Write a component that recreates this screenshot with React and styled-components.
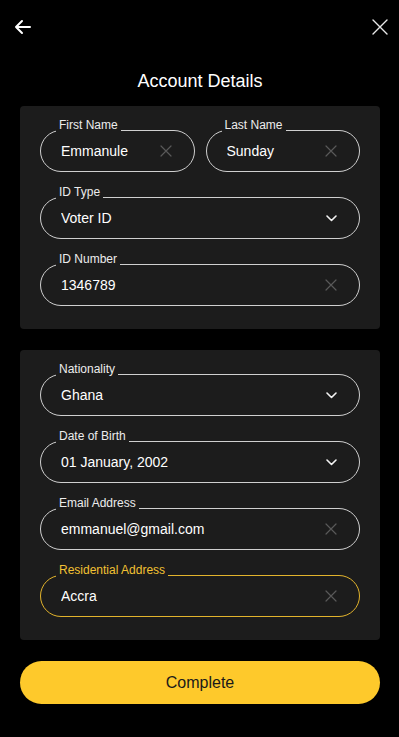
import React from "react"
import styled, { createGlobalStyle } from "styled-components"

const GlobalStyle = createGlobalStyle`
  * { box-sizing: border-box; }
  html, body {
    margin: 0;
    background: #000;
    font-family: "Liberation Sans", Arial, sans-serif;
    color: #fff;
  }
`

const Page = styled.div`
  width: 399px;
  min-height: 737px;
  background: #000;
  padding: 0 19px 0 20px;
`

const TopBar = styled.header`
  height: 54px;
  margin: 0 -8px 0 -6px;
  display: flex;
  align-items: center;
  justify-content: space-between;
`

const IconButton = styled.button`
  background: none;
  border: 0;
  padding: 0;
  display: flex;
  align-items: center;
  justify-content: center;
  cursor: pointer;
`

const Title = styled.h1`
  margin: 16px 0 14px;
  font-size: 18px;
  line-height: 22px;
  font-weight: 400;
  text-align: center;
  color: #fff;
`

const Card = styled.section`
  background: #1c1c1c;
  border-radius: 4px;
  padding: 12px 20px 23px;
  display: flex;
  flex-direction: column;
  gap: 13px;
  & + & {
    margin-top: 21px;
  }
`

const Row = styled.div`
  display: grid;
  grid-template-columns: 1fr 1fr;
  gap: 11px;
`

const Field = styled.fieldset`
  margin: 0;
  min-width: 0;
  padding: 0 22px 0 20px;
  font-family: "Liberation Sans", Arial, sans-serif;
  border: 1px solid ${p => (p.$active ? "#e2b32c" : "#cfcfcf")};
  border-radius: 22px;
`

const Legend = styled.legend`
  margin-left: -5px;
  padding: 0 3px 10px;
  font-family: "Liberation Sans", Arial, sans-serif;
  font-size: 12px;
  line-height: 14px;
  color: ${p => (p.$active ? "#f2c133" : "#ececec")};
`

const Control = styled.div`
  height: 40px;
  margin-top: -11px;
  display: flex;
  align-items: center;
  gap: 10px;
`

const Value = styled.span`
  flex: 1;
  min-width: 0;
  font-size: 14px;
  color: #fff;
  white-space: nowrap;
  overflow: hidden;
`

const IconSlot = styled.span`
  width: 12px;
  height: 12px;
  flex-shrink: 0;
  display: flex;
  align-items: center;
  justify-content: center;
`

const CompleteButton = styled.button`
  margin-top: 21px;
  width: 100%;
  height: 43px;
  border: 0;
  border-radius: 22px;
  background: #fec92b;
  color: #1a1a1a;
  font-family: "Liberation Sans", Arial, sans-serif;
  font-size: 16px;
  cursor: pointer;
`

const ArrowLeft = () => (
  <svg width="18" height="16" viewBox="0 0 18 16" fill="none" stroke="#fff" strokeWidth="2" strokeLinecap="round" strokeLinejoin="round">
    <path d="M16 8H2M8 2L2 8l6 6" />
  </svg>
)

const Close = () => (
  <svg width="16" height="16" viewBox="0 0 16 16" fill="none" stroke="#e8e8e8" strokeWidth="1.4" strokeLinecap="round">
    <path d="M1 1l14 14M15 1L1 15" />
  </svg>
)

const Clear = () => (
  <svg width="12" height="12" viewBox="0 0 12 12" fill="none" stroke="#595959" strokeWidth="1.2" strokeLinecap="round">
    <path d="M1 1l10 10M11 1L1 11" />
  </svg>
)

const Chevron = () => (
  <svg width="11" height="7" viewBox="0 0 11 7" fill="none" stroke="#f2f2f2" strokeWidth="1.6" strokeLinecap="round" strokeLinejoin="round">
    <path d="M1 1l4.5 4.5L10 1" />
  </svg>
)

const InputField = ({ label, value, select, active }) => (
  <Field $active={active}>
    <Legend $active={active}>{label}</Legend>
    <Control>
      <Value>{value}</Value>
      <IconSlot>{select ? <Chevron /> : <Clear />}</IconSlot>
    </Control>
  </Field>
)

const App = () => {
  return (
    <Page>
      <GlobalStyle />
      <TopBar>
        <IconButton aria-label="Back">
          <ArrowLeft />
        </IconButton>
        <IconButton aria-label="Close">
          <Close />
        </IconButton>
      </TopBar>

      <Title>Account Details</Title>

      <Card>
        <Row>
          <InputField label="First Name" value="Emmanule" />
          <InputField label="Last Name" value="Sunday" />
        </Row>
        <InputField label="ID Type" value="Voter ID" select />
        <InputField label="ID Number" value="1346789" />
      </Card>

      <Card>
        <InputField label="Nationality" value="Ghana" select />
        <InputField label="Date of Birth" value="01 January, 2002" select />
        <InputField label="Email Address" value="emmanuel@gmail.com" />
        <InputField label="Residential Address" value="Accra" active />
      </Card>

      <CompleteButton>Complete</CompleteButton>
    </Page>
  )
}

export default App
